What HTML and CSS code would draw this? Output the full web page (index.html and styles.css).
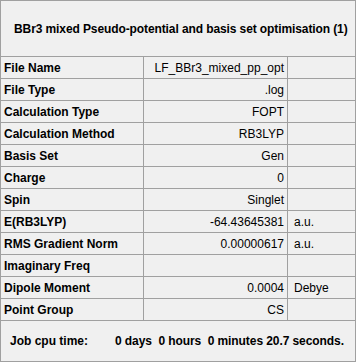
FILE: index.html
```html
<!DOCTYPE html>
<html lang="en">
<head>
    <meta charset="UTF-8">
    <title>Summary</title>
    <link rel="stylesheet" href="styles.css">
</head>
<body>

    <div class="panel">
        <div class="panel-title">BBr3 mixed Pseudo-potential and basis set optimisation (1)</div>

        <div class="props">
            <div class="label">File Name</div><div class="value">LF_BBr3_mixed_pp_opt</div><div class="unit"></div>
            <div class="label">File Type</div><div class="value">.log</div><div class="unit"></div>
            <div class="label">Calculation Type</div><div class="value">FOPT</div><div class="unit"></div>
            <div class="label">Calculation Method</div><div class="value">RB3LYP</div><div class="unit"></div>
            <div class="label">Basis Set</div><div class="value">Gen</div><div class="unit"></div>
            <div class="label">Charge</div><div class="value">0</div><div class="unit"></div>
            <div class="label">Spin</div><div class="value">Singlet</div><div class="unit"></div>
            <div class="label">E(RB3LYP)</div><div class="value">-64.43645381</div><div class="unit">a.u.</div>
            <div class="label">RMS Gradient Norm</div><div class="value">0.00000617</div><div class="unit">a.u.</div>
            <div class="label">Imaginary Freq</div><div class="value"></div><div class="unit"></div>
            <div class="label">Dipole Moment</div><div class="value">0.0004</div><div class="unit">Debye</div>
            <div class="label">Point Group</div><div class="value">CS</div><div class="unit"></div>
        </div>

        <div class="cpu">
            <span class="cpu-label">Job cpu time:</span>
            <span class="cpu-value">0 days  0 hours  0 minutes 20.7 seconds.</span>
        </div>
    </div>

</body>
</html>
```

FILE: styles.css
```css
body {
    margin: 0;
    background: #fff;
    font-family: 'Liberation Sans', Arial, sans-serif;
    font-size: 12px;
    color: #000;
}

.panel {
    width: 354px;
    border: 1px solid #a0a0a0;
    background-color: #f0f0f0;
}

.panel-title {
    height: 55px;
    padding-left: 13px;
    display: flex;
    align-items: center;
    font-weight: bold;
    letter-spacing: -0.1px;
}

/* property grid: the 1px gaps show the grey background as lines */
.props {
    display: grid;
    grid-template-columns: 142px 143px 67px;
    grid-auto-rows: 21px;
    gap: 1px;
    background-color: #a0a0a0;
    border-top: 1px solid #a0a0a0;
    border-bottom: 1px solid #a0a0a0;
}

.props div {
    background-color: #f0f0f0;
    display: flex;
    align-items: center;
    white-space: nowrap;
}

.props .label {
    padding-left: 3px;
    font-weight: bold;
}

.props .value {
    justify-content: flex-end;
    padding-right: 3px;
}

.props .unit {
    padding-left: 6px;
}

.cpu {
    height: 40px;
    display: flex;
    align-items: center;
    font-weight: bold;
    white-space: pre;
}

.cpu-label {
    width: 105px;
    padding-left: 9px;
}

.cpu-value {
    letter-spacing: -0.08px;
}
```
